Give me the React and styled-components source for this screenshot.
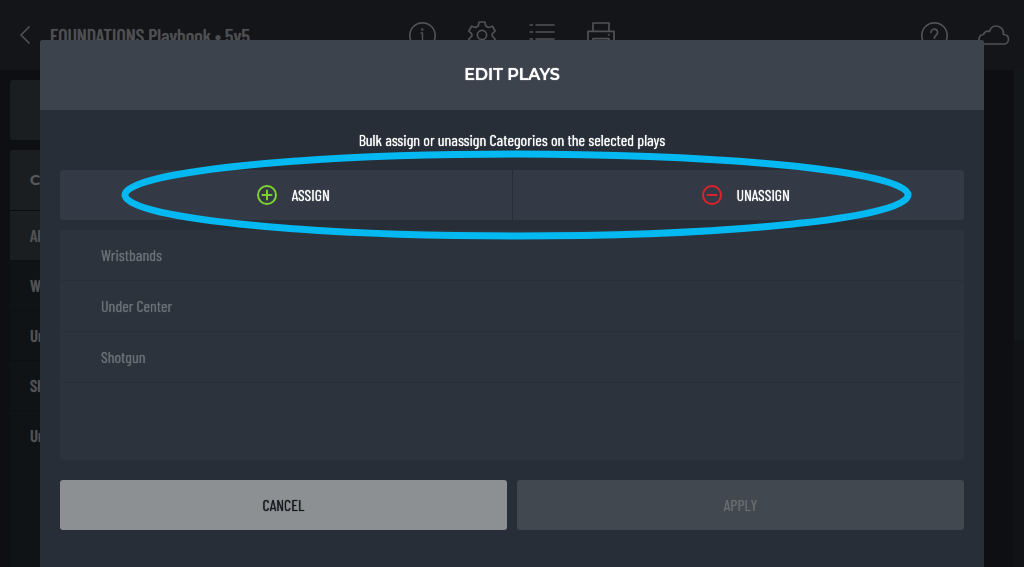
import React from "react";
import styled, { createGlobalStyle } from "styled-components";

const condensed = '"Barlow Condensed", "Roboto Condensed", "Liberation Sans Narrow", "Roboto", sans-serif';
const wide = '"Montserrat", "Inter", sans-serif';

const GlobalStyle = createGlobalStyle`
  *, *::before, *::after { box-sizing: border-box; }
  body {
    margin: 0;
    background: #0d0f13;
    color: #fff;
    font-family: ${condensed};
    text-shadow: 0 0 1px currentColor;
  }
  button { font: inherit; text-shadow: inherit; border: 0; padding: 0; cursor: pointer; }
  button:disabled { cursor: default; }
  h1, h2, p, ul { margin: 0; padding: 0; }
  ul { list-style: none; }
`;

const Page = styled.div`
  display: flex;
  flex-direction: column;
  height: 100vh;
  overflow: hidden;
`;

const TopBar = styled.header`
  display: grid;
  grid-template-columns: 1fr auto 1fr;
  align-items: center;
  flex: none;
  height: 70px;
  padding: 0 15px;
  background: #131519;
  color: #505153;
`;

const Heading = styled.div`
  display: flex;
  align-items: center;
  gap: 5px;
`;

const BookTitle = styled.h1`
  font-size: 20px;
  line-height: 24px;
  font-weight: 500;
  white-space: nowrap;
  color: #4e4f51;
`;

const IconGroup = styled.div`
  display: flex;
  gap: 30px;
  justify-content: flex-end;
`;

const IconButton = styled.button`
  display: flex;
  align-items: center;
  justify-content: center;
  width: 30px;
  height: 30px;
  background: none;
  color: inherit;
`;

const Glyph = styled.svg`
  display: block;
  flex: none;
  overflow: visible;
  fill: none;
  stroke: currentColor;
  stroke-linecap: round;
  stroke-linejoin: round;
`;

const Workspace = styled.div`
  display: flex;
  flex: 1;
  min-height: 0;
  justify-content: space-between;
`;

const Sidebar = styled.aside`
  display: flex;
  flex-direction: column;
  gap: 10px;
  width: 240px;
  padding: 10px 0 0 10px;
`;

const SidebarCard = styled.div`
  flex: none;
  height: 60px;
  border-radius: 3px;
  background: #1a1e20;
`;

const CategoryPanel = styled.nav`
  flex: 1;
  border-radius: 3px 3px 0 0;
  background: #0f1316;
  overflow: hidden;
`;

const PanelTitle = styled.h2`
  height: 60px;
  padding-left: 20px;
  background: #1a1e20;
  color: #56585a;
  font-family: ${wide};
  font-size: 14px;
  font-weight: 600;
  line-height: 60px;
`;

const CategoryButton = styled.button`
  display: block;
  width: 100%;
  height: 50px;
  padding: 0 0 2px 20px;
  border-top: 1px solid ${(p) => (p.$active ? "#0b0d10" : "#0d1013")};
  background: ${(p) => (p.$active ? "#1a1e20" : "#0f1316")};
  color: #515355;
  font-size: 17px;
  font-weight: 500;
  line-height: 20px;
  text-align: left;
`;

const ScrollTrack = styled.div`
  width: 10px;
  background: #101215;
`;

const ScrollThumb = styled.div`
  height: 270px;
  background: #131719;
`;

const Dialog = styled.section`
  position: fixed;
  inset: 40px 40px 0;
  display: flex;
  flex-direction: column;
  border-radius: 3px 3px 0 0;
  background: #272e37;
  overflow: hidden;
`;

const DialogTitle = styled.h2`
  flex: none;
  height: 70px;
  background: #3d434d;
  font-family: ${wide};
  font-size: 16px;
  font-weight: 600;
  line-height: 70px;
  text-align: center;
`;

const DialogBody = styled.div`
  display: flex;
  flex-direction: column;
  padding: 20px;
`;

const Hint = styled.p`
  margin-bottom: 20px;
  font-size: 16px;
  font-weight: 400;
  line-height: 20px;
  text-align: center;
`;

const ModeSwitch = styled.div`
  position: relative;
  z-index: 1;
  display: grid;
  grid-template-columns: 1fr 1fr;
  gap: 1px;
  margin-bottom: 10px;
`;

const ModeButton = styled.button`
  display: flex;
  align-items: center;
  justify-content: center;
  gap: 15px;
  height: 50px;
  padding-left: 15px;
  border-radius: ${(p) => (p.$side === "left" ? "3px 0 0 3px" : "0 3px 3px 0")};
  background: #333a45;
  color: #fff;
  font-size: 16px;
  font-weight: 400;
  line-height: 20px;
`;

const ModeIcon = styled(Glyph)`
  color: ${(p) => p.$tone};
`;

const Highlight = styled.svg`
  position: absolute;
  top: -20px;
  left: 61px;
  width: calc(100% - 113px);
  height: 90px;
  overflow: visible;
  pointer-events: none;
  fill: none;
  stroke: #04b9f1;
  stroke-width: 7;
`;

const PlayList = styled.ul`
  height: 230px;
  margin-bottom: 20px;
  border-radius: 3px;
  background: #2c333c;
`;

const PlayItem = styled.li`
  display: flex;
  align-items: center;
  height: 51px;
  padding: 0 0 1px 41px;
  border-bottom: 1px solid #282f38;
  color: #6b7178;
  font-size: 16px;
  font-weight: 400;
  line-height: 20px;
`;

const Actions = styled.div`
  display: grid;
  grid-template-columns: 1fr 1fr;
  gap: 10px;
`;

const ActionButton = styled.button`
  height: 50px;
  border-radius: 3px;
  background: #8c9092;
  color: #14181c;
  font-size: 16px;
  font-weight: 400;
  line-height: 20px;

  &:disabled {
    background: #42484f;
    color: #686d73;
  }
`;

const BarIcon = ({ children }) => (
  <Glyph width="30" height="30" viewBox="0 0 30 30" strokeWidth="1.7">{children}</Glyph>
);

const BackIcon = () => (
  <BarIcon><path d="M14 7l-8 8 8 8" /></BarIcon>
);

const InfoIcon = () => (
  <BarIcon>
    <circle cx="15.500" cy="15.500" r="12.700" />
    <path d="M15.500 13v9M14 13h1.500M13.500 22h4" strokeWidth="1.400" />
    <circle cx="15.300" cy="9.500" r="0.500" />
  </BarIcon>
);

const GearIcon = () => (
  <BarIcon>
    <circle cx="15" cy="15" r="4.600" />
    <path d="M12.200 2h5.600l1 4 2.600 1.500 4-1.300 2.800 4.800-3 2.800v2.400l3 2.800-2.800 4.800-4-1.300-2.600 1.500-1 4h-5.600l-1-4-2.600-1.500-4 1.300L1.800 19l3-2.800v-2.400l-3-2.800 2.800-4.800 4 1.300L11.200 6z" />
  </BarIcon>
);

const ListIcon = () => (
  <BarIcon>
    <path strokeLinecap="butt" d="M2.500 5H6M8.500 5h19.200M2.500 12H6M8.500 12h19.200M2.500 19H6M8.500 19h19.200M2.500 26H6M8.500 26h19.200" />
  </BarIcon>
);

const PrinterIcon = () => (
  <BarIcon>
    <path d="M6 11.300V3h16v8.300M6 22H1V11.300h26V22h-5M6 18.700h16V28H6z" />
    <circle cx="21.800" cy="15" r="0.300" />
  </BarIcon>
);

const HelpIcon = () => (
  <BarIcon>
    <circle cx="15.500" cy="15.500" r="12.700" />
    <path d="M12 12.500a3.300 3.300 0 1 1 5.300 2.500c-1.300.9-1.900 1.600-1.900 3.200" />
    <circle cx="15.400" cy="22" r="0.500" />
  </BarIcon>
);

const CloudIcon = () => (
  <BarIcon>
    <path d="M4.500 24C1.500 24 0 22 0 19.500c0-2.800 2-4.800 4.500-5 .5-2.500 3-4 6-3C11.500 8 14 6 17 6c4.500 0 8 3.500 7.500 8.500 3 .2 5 2 5 4.700 0 2.800-2 4.800-4.500 4.800z" />
  </BarIcon>
);

const categories = ["All Plays", "Wristbands", "Under Center", "Shotgun", "Unassigned"];
const plays = ["Wristbands", "Under Center", "Shotgun"];

export default function App() {
  return (
    <>
      <GlobalStyle />
      <Page>
        <TopBar>
          <Heading>
            <IconButton aria-label="Back"><BackIcon /></IconButton>
            <BookTitle>FOUNDATIONS Playbook • 5v5</BookTitle>
          </Heading>
          <IconGroup>
            <IconButton aria-label="Info"><InfoIcon /></IconButton>
            <IconButton aria-label="Settings"><GearIcon /></IconButton>
            <IconButton aria-label="List"><ListIcon /></IconButton>
            <IconButton aria-label="Print"><PrinterIcon /></IconButton>
          </IconGroup>
          <IconGroup>
            <IconButton aria-label="Help"><HelpIcon /></IconButton>
            <IconButton aria-label="Cloud"><CloudIcon /></IconButton>
          </IconGroup>
        </TopBar>
        <Workspace>
          <Sidebar>
            <SidebarCard />
            <CategoryPanel>
              <PanelTitle>CATEGORIES</PanelTitle>
              {categories.map((name, i) => (
                <CategoryButton key={name} $active={i === 0}>{name}</CategoryButton>
              ))}
            </CategoryPanel>
          </Sidebar>
          <ScrollTrack><ScrollThumb /></ScrollTrack>
        </Workspace>
      </Page>
      <Dialog role="dialog" aria-labelledby="dialog-title">
        <DialogTitle id="dialog-title">EDIT PLAYS</DialogTitle>
        <DialogBody>
          <Hint>Bulk assign or unassign Categories on the selected plays</Hint>
          <ModeSwitch>
            <ModeButton $side="left">
              <ModeIcon $tone="#7ed32f" width="20" height="20" viewBox="0 0 20 20" strokeWidth="2">
                <circle cx="10" cy="10" r="9" />
                <path d="M10 5.500v9M5.500 10h9" />
              </ModeIcon>
              ASSIGN
            </ModeButton>
            <ModeButton $side="right">
              <ModeIcon $tone="#e0212b" width="20" height="20" viewBox="0 0 20 20" strokeWidth="2">
                <circle cx="10" cy="10" r="9" />
                <path d="M5.500 10h9" />
              </ModeIcon>
              UNASSIGN
            </ModeButton>
            <Highlight aria-hidden="true">
              <ellipse cx="50%" cy="50%" rx="49.5%" ry="45.5%" />
            </Highlight>
          </ModeSwitch>
          <PlayList>
            {plays.map((name) => <PlayItem key={name}>{name}</PlayItem>)}
          </PlayList>
          <Actions>
            <ActionButton>CANCEL</ActionButton>
            <ActionButton disabled>APPLY</ActionButton>
          </Actions>
        </DialogBody>
      </Dialog>
    </>
  );
}
